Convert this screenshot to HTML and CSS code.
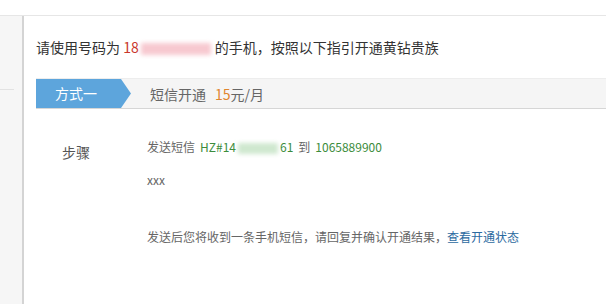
FILE: index.html
```html
<!DOCTYPE html>
<html lang="zh-CN">
<head>
  <meta charset="UTF-8">
  <title>开通黄钻贵族</title>
  <link rel="stylesheet" href="styles.css">
</head>
<body>
  <div class="topbar"></div>
  <div class="layout">
    <aside class="sidebar">
      <div class="side-item"></div>
    </aside>
    <main class="main">
      <h3 class="title">请使用号码为 <span class="phone">18<span class="mask mask-pink"></span></span>的手机，按照以下指引开通黄钻贵族</h3>

      <div class="way">
        <span class="way-tag">方式一</span>
        <span class="way-name">短信开通</span>
        <span class="price"><em>15</em>元/月</span>
      </div>

      <div class="steps">
        <div class="steps-label">步骤</div>
        <div class="steps-body">
          <p>发送短信<span class="code">HZ#14<span class="mask mask-green"></span>61</span>到<span class="code">1065889900</span></p>
          <p>xxx</p>
          <p class="tip">发送后您将收到一条手机短信，请回复并确认开通结果，<a href="#">查看开通状态</a></p>
        </div>
      </div>
    </main>
  </div>
</body>
</html>
```

FILE: styles.css
```css
html, body {
  margin: 0;
  height: 100%;
}
body {
  font-family: "Noto Sans CJK SC", "Liberation Sans", sans-serif;
  font-size: 12px;
  color: #666;
  background: #fff;
}

.topbar {
  height: 15px;
  border-bottom: 1px solid #e6e6e6;
}

.layout {
  display: flex;
  height: calc(100% - 16px);
}

.sidebar {
  width: 22px;
  flex-shrink: 0;
  background: #f6f6f6;
  border-right: 2px solid #d4d4d4;
}
.sidebar .side-item {
  height: 73px;
  width: 14px;
  border-bottom: 1px solid #e2e2e2;
}

.main {
  flex: 1;
  padding: 21px 0 0 12px;
}

.title {
  margin: 0;
  font-size: 14px;
  font-weight: normal;
  line-height: 20px;
  color: #333;
}
.title .phone {
  color: #c9372c;
  margin-right: 4px;
}
.mask {
  display: inline-block;
  vertical-align: middle;
  filter: blur(2px);
}
.mask-pink {
  width: 70px;
  height: 12px;
  margin-left: 2px;
  background: #f7c9d0;
}
.mask-green {
  width: 40px;
  height: 11px;
  margin: 0 2px;
  background: #cfe8cf;
}

.way {
  display: flex;
  align-items: center;
  height: 29px;
  margin-top: 21px;
  background: #f5f5f5;
  border-top: 1px solid #ededed;
  border-bottom: 1px solid #d6d6d6;
  font-size: 14px;
}
.way-tag {
  width: 95px;
  height: 100%;
  line-height: 29px;
  padding-left: 19px;
  box-sizing: border-box;
  color: #fff;
  background: #5da5dc;
  clip-path: polygon(0 0, 85px 0, 95px 50%, 85px 100%, 0 100%);
}
.way-name {
  margin-left: 19px;
  color: #666;
}
.price {
  margin-left: 9px;
  color: #666;
}
.price em {
  font-style: normal;
  color: #e0852e;
}

.steps {
  display: flex;
  padding: 28px 0 0 26px;
}
.steps-label {
  width: 85px;
  margin-top: 5px;
  font-size: 14px;
  line-height: 20px;
  color: #555;
}
.steps-body p {
  margin: 0 0 13px;
  line-height: 20px;
}
.steps-body .code {
  margin: 0 5px;
  color: #3c8c3c;
}
.steps-body .tip {
  margin-top: 37px;
}
.tip a {
  color: #2c6aa0;
  text-decoration: none;
}
```
